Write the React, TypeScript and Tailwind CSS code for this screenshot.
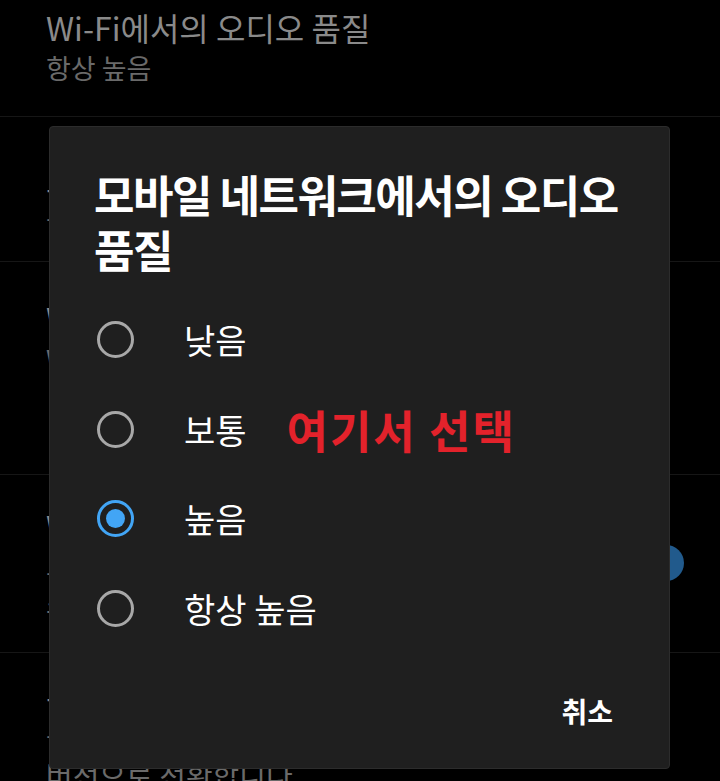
import React from 'react';

const FONT = { fontFamily: '"Noto Sans CJK KR", "Noto Sans", sans-serif' };

const options = [
  { label: '낮음', selected: false },
  { label: '보통', selected: false, note: '여기서 선택' },
  { label: '높음', selected: true },
  { label: '항상 높음', selected: false },
];

function Radio({ selected }: { selected: boolean }) {
  if (selected) {
    return (
      <div className="w-[37px] h-[37px] rounded-full border-[3.5px] border-[#42a5f5] flex items-center justify-center shrink-0">
        <div className="w-[19px] h-[19px] rounded-full bg-[#42a5f5]" />
      </div>
    );
  }
  return <div className="w-[37px] h-[37px] rounded-full border-[3.5px] border-[#a8a8a8] shrink-0" />;
}

function QualityDialog() {
  return (
    <div className="absolute left-[49px] top-[126px] w-[621px] h-[643px] rounded-[4px] bg-[#1f1f1f] border border-[#2c2c2c] flex flex-col">
      <h2 className="pt-[40px] pl-[44px] pr-[30px] text-[44px] leading-[55px] font-bold text-white tracking-[-1.5px]">
        모바일 네트워크에서의 오디오 품질
      </h2>

      <div className="mt-[18px] flex flex-col">
        {options.map((opt) => (
          <div key={opt.label} className="h-[89.5px] flex items-center pl-[47px]">
            <Radio selected={opt.selected} />
            <span className="ml-[50px] text-[34px] text-white">{opt.label}</span>
            {opt.note && (
              <span className="ml-[40px] text-[45px] font-bold text-[#e3222b] tracking-[2px]">{opt.note}</span>
            )}
          </div>
        ))}
      </div>

      <div className="flex-1 flex items-center justify-end pr-[56px]">
        <button className="text-[28px] font-bold text-white">취소</button>
      </div>
    </div>
  );
}

export default function App() {
  return (
    <div className="relative w-[720px] h-[781px] bg-black overflow-hidden" style={FONT}>
      {/* settings list behind the dialog */}
      <div className="flex flex-col">
        <div className="h-[117px] pl-[46px] pt-[5px] border-b border-[#161616]">
          <div className="text-[32px] leading-[44px] text-[#8a8a8a]">Wi-Fi에서의 오디오 품질</div>
          <div className="text-[27px] leading-[38px] text-[#6a6a6a]">항상 높음</div>
        </div>
        <div className="h-[145px] pl-[46px] pt-[40px] border-b border-[#161616]">
          <div className="text-[32px] leading-[44px] text-[#8a8a8a]">모바일 네트워크에서의 오디오 품질</div>
          <div className="text-[27px] leading-[38px] text-[#6a6a6a]">높음</div>
        </div>
        <div className="h-[213px] pl-[46px] pt-[34px] border-b border-[#161616]">
          <div className="text-[32px] leading-[44px] text-[#8a8a8a]">Wi-Fi에서의 동영상 화질</div>
          <div className="text-[27px] leading-[38px] text-[#6a6a6a]">Wi-Fi 연결 시 기본 화질</div>
        </div>
        <div className="h-[178px] pl-[46px] pr-[36px] flex items-center justify-between border-b border-[#161616]">
          <div>
            <div className="text-[32px] leading-[40px] text-[#8a8a8a]">Wi-Fi로만 스트리밍</div>
            <div className="text-[27px] leading-[38px] text-[#6a6a6a]">모바일 네트워크에서는</div>
            <div className="text-[27px] leading-[38px] text-[#6a6a6a]">스트리밍하지 않습니다</div>
          </div>
          <div className="w-[36px] h-[36px] rounded-full bg-[#215a8c] mt-[-2px]" />
        </div>
        <div className="pl-[46px] pt-[24px]">
          <div className="text-[32px] leading-[40px] text-[#8a8a8a]">동영상 사용 안함</div>
          <div className="text-[27px] leading-[38px] text-[#6a6a6a]">음악 동영상을 오디오 전용</div>
          <div className="text-[29px] leading-[38px] text-[#6a6a6a]">버전으로 전환합니다</div>
        </div>
      </div>

      <QualityDialog />
    </div>
  );
}
